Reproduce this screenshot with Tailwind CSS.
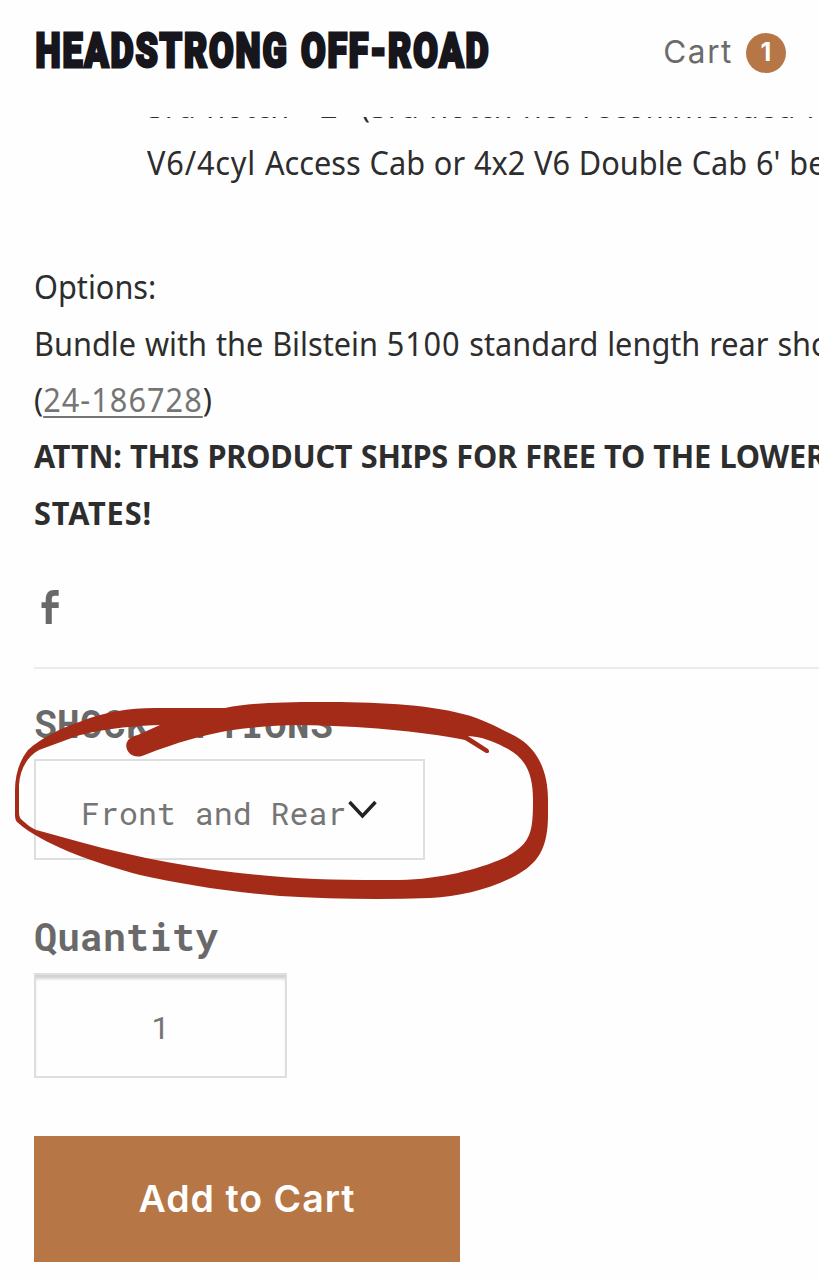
<!DOCTYPE html>
<html lang="en">
<head>
  <meta charset="UTF-8">
  <meta name="viewport" content="width=device-width, initial-scale=1.0">
  <title>Headstrong Off-Road</title>
  <script src="https://cdn.jsdelivr.net/npm/@tailwindcss/browser@4"></script>
</head>
<body class="relative h-[1279px] w-[819px] overflow-hidden bg-[#fefefe] font-['Noto_Sans',sans-serif] text-[#2d2d2d]">
  <!-- Header -->
  <header class="flex h-[117px] items-start justify-between pr-[33px] pl-[35px]">
    <svg class="mt-6 h-[54px] w-[456px] overflow-visible" viewBox="0 0 456 54">
      <text x="0.500" y="43" textLength="455" lengthAdjust="spacingAndGlyphs" letter-spacing="2.500" word-spacing="2" font-family="Roboto, sans-serif" font-weight="900" font-size="48.500" fill="#17161c" stroke="#17161c" stroke-width="3">HEADSTRONG OFF-ROAD</text>
    </svg>
    <a href="#" class="mt-[33px] flex items-start gap-[13px] font-['Inter',sans-serif] text-[#6b6b6b]">
      <span class="-mt-[1px] text-[31.500px] leading-10 tracking-[1.600px]">Cart</span>
      <span class="flex size-[40px] items-center justify-center rounded-full bg-[#b67645] text-[25px] font-bold text-white">1</span>
    </a>
  </header>

  <main>
    <!-- Description -->
    <section class="h-[423px] overflow-hidden text-[33px] leading-[56.6px] whitespace-nowrap">
      <div class="-mt-[39px] ml-[147px] origin-left scale-x-[0.93]">
        <p class="tracking-[0.2px] [word-spacing:2.2px]">3rd notch - 2" (3rd notch not recommended for</p>
        <p class="[word-spacing:0.9px]"><span class="tracking-[0.9px]">V6/4cyl</span> Access Cab or 4x2 V6 Double Cab 6' bed</p>
      </div>
      <div class="mt-[68px] ml-[34px] origin-left scale-x-[0.93]">
        <p>Options:</p>
        <p class="[word-spacing:1px]">Bundle with the Bilstein <span class="tracking-[0.9px]">5100</span> standard length rear shocks</p>
        <p>(<a href="#" class="tracking-[1.1px] text-[#757575] underline decoration-2 underline-offset-4">24-186728</a>)</p>
        <p class="-mt-px font-bold tracking-[-0.25px] [word-spacing:0.7px]">ATTN: THIS PRODUCT SHIPS FOR FREE TO THE LOWER 48</p>
        <p class="font-bold tracking-[0.9px]">STATES!</p>
      </div>
    </section>

    <!-- Share -->
    <div class="ml-[34px] h-[129px] border-b-2 border-[#ebebeb] pt-[50px] pl-[7px]">
      <svg class="h-[34px] w-[18px]" viewBox="0 0 18 34" fill="#696969">
        <path d="M4.700 34V18H.5v-5.700h4.200V9.500C4.700 3 8 0 13 0H17.700v5.700H14c-2.300 0-3.200 1-3.200 3v3.600h6.900V18h-6.900v16z"/>
      </svg>
    </div>

    <!-- Product form -->
    <form class="ml-[34px] font-['Roboto_Mono','DejaVu_Sans_Mono',monospace] text-[#696969]">
      <label class="mt-[29px] block text-[38px] leading-[50px] font-bold tracking-[0.2px]">SHOCK OPTIONS</label>
      <div class="mt-[11px] flex h-[101px] w-[391px] items-center border-2 border-[#dedede] pt-2 pl-[45px] text-[31.6px] text-[#757575]">
        <span>Front and Rear</span>
        <svg class="-mt-[7px] ml-[2px] h-[20px] w-[30px] shrink-0" viewBox="0 0 30 20" fill="none" stroke="#222" stroke-width="3.500">
          <path d="M1.500 2l13 14L27.500 2"/>
        </svg>
      </div>
      <label class="mt-[51px] block text-[38px] leading-[50px] font-bold tracking-[0.2px]">Quantity</label>
      <div class="mt-[12px] flex h-[105px] w-[253px] items-center justify-center border-2 border-[#dedede] pt-1 font-['Roboto',sans-serif] text-[32px] text-[#757575] shadow-[inset_0_5px_3px_-1px_#d3d3d3]">1</div>
      <button type="button" class="mt-[58px] flex h-[126px] w-[426px] items-center justify-center bg-[#b67645] font-['Inter',sans-serif] text-[37.5px] font-semibold tracking-[1px] text-white">Add to Cart</button>
    </form>
  </main>

  <!-- Marker circle round the shock option -->
  <svg class="absolute top-0 left-0 h-[1279px] w-[819px]" viewBox="0 0 819 1279" fill="#a42b18" fill-rule="evenodd">
    <path d="M15 790C15 774 20 760 28 750C41 738 61 728 82 721C105 712 128 708 155 708H225C250 703 280 702 320 702C375 702 425 704 463 714C484 719 500 729 515 736C539 749 548 773 548 800V815C548 850 537 864 515 876C488 890 460 896 430 898C380 900 330 899 280 896C230 892 180 884 140 875C95 863 50 847 23 827L17 822Q15 820 15 815Z
      M19 785V812Q19 818 22 820C32 829 36 830 40 831L80 842C145 860 210 871 270 876C310 880 350 880 400 880C440 879 477 870 504 858C531 844 533 833 533 800C533 774 526 757 504 747C493 741 482 737 468 736L488 749Q491 753 486 753L465 740C420 731 360 726 300 725C240 726 200 733 142 756C130 759 124 748 127 742C130 736 136 736 140 734L160 725C125 726 94 731 77 736L39 750C27 757 20 769 19 785Z"/>
  </svg>
</body>
</html>
